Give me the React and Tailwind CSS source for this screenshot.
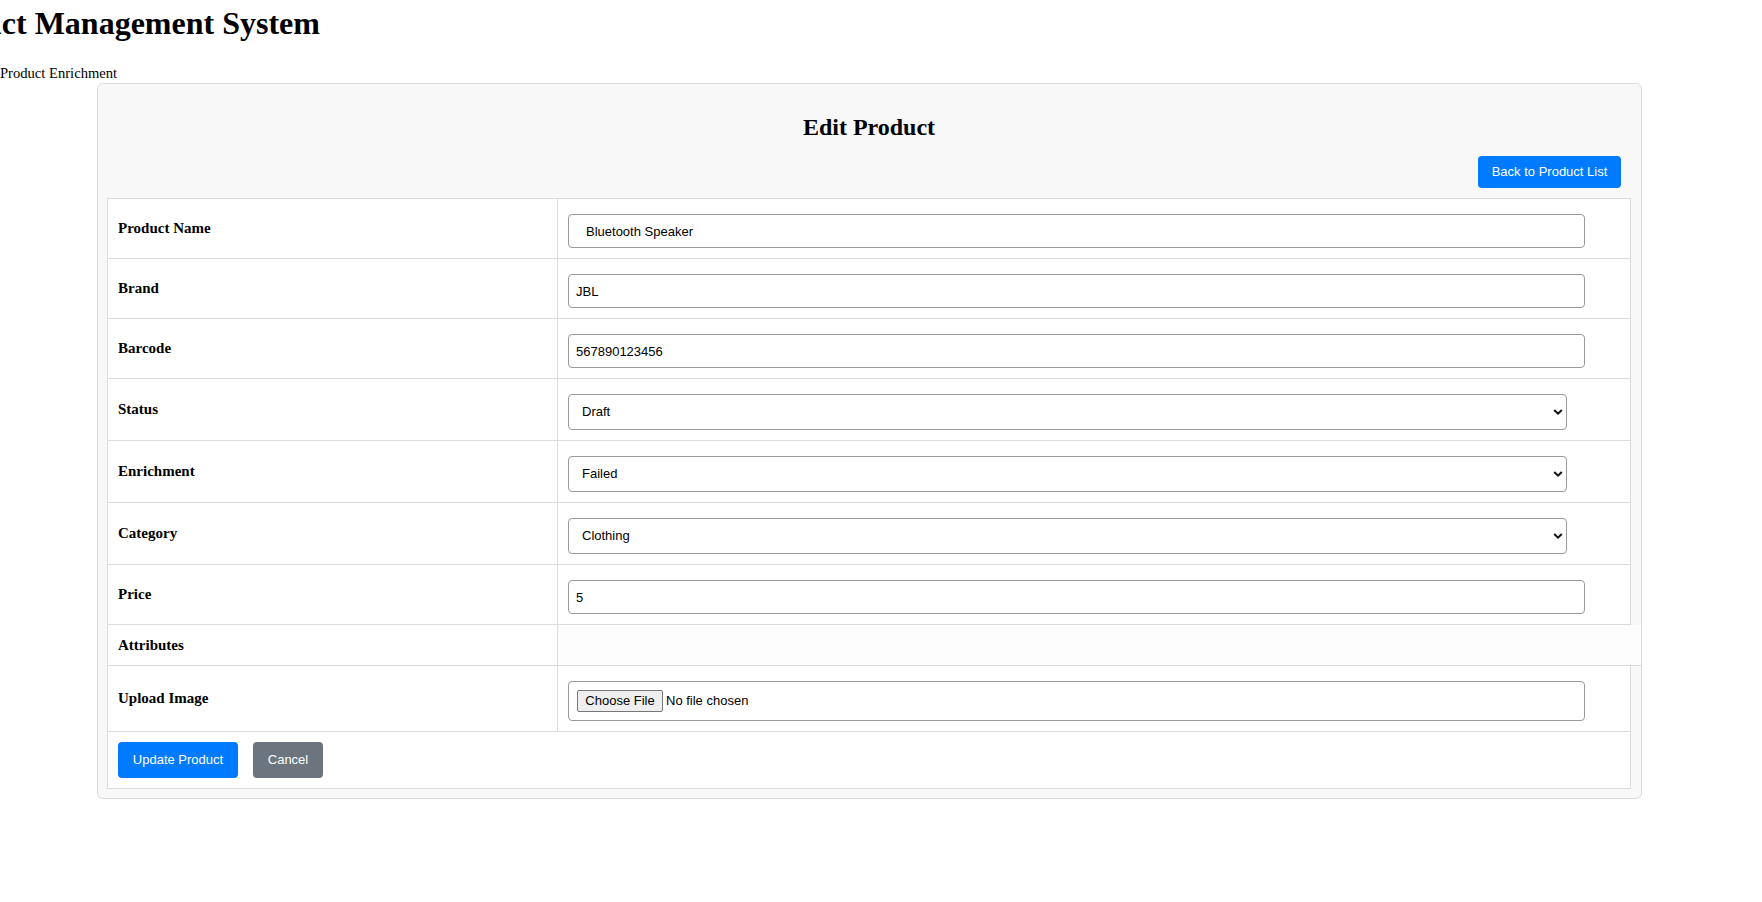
const sans = "font-['Liberation_Sans',Arial,sans-serif]";

const rows = [
  { label: "Product Name", kind: "text", value: "Bluetooth Speaker", pad: "pl-[17px]" },
  { label: "Brand", kind: "text", value: "JBL", pad: "pl-[7px]" },
  { label: "Barcode", kind: "text", value: "567890123456", pad: "pl-[7px]" },
  { label: "Status", kind: "select", value: "Draft", options: ["Draft", "Active", "Archived"] },
  { label: "Enrichment", kind: "select", value: "Failed", options: ["Pending", "Completed", "Failed"] },
  { label: "Category", kind: "select", value: "Clothing", options: ["Electronics", "Clothing", "Home"] },
  { label: "Price", kind: "text", value: "5", pad: "pl-[7px]" },
  { label: "Attributes", kind: "empty" },
  { label: "Upload Image", kind: "file" },
];

function Field({ row }) {
  if (row.kind === "text") {
    return (
      <input
        type="text"
        defaultValue={row.value}
        className={`block h-[34px] w-[1017px] rounded-[4px] border border-[#9a9a9a] bg-white text-[13px] text-black outline-none ${row.pad} ${sans}`}
      />
    );
  }
  if (row.kind === "select") {
    return (
      <div className="relative h-[36px] w-[999px]">
        <select
          defaultValue={row.value}
          className={`block h-full w-full appearance-none rounded-[4px] border border-[#9a9a9a] bg-white pl-[13px] text-[13px] text-black outline-none ${sans}`}
        >
          {row.options.map((o) => (
            <option key={o}>{o}</option>
          ))}
        </select>
        <svg
          className="pointer-events-none absolute right-[4px] top-1/2 -translate-y-1/2"
          width="10"
          height="7"
          viewBox="0 0 10 7"
        >
          <path d="M1.2 1.5L5 5.2L8.8 1.5" stroke="#111" strokeWidth="2" fill="none" />
        </svg>
      </div>
    );
  }
  // file input drawn by hand
  return (
    <div className={`flex h-[40px] w-[1017px] items-center rounded-[4px] border border-[#9a9a9a] bg-white pl-[8px] text-[13px] text-black ${sans}`}>
      <span className="flex h-[22px] w-[86px] items-center justify-center rounded-[2px] border border-[#767676] bg-[#efefef]">
        Choose File
      </span>
      <span className="ml-[3px]">No file chosen</span>
    </div>
  );
}

export default function App() {
  return (
    <div className="min-h-screen overflow-hidden bg-white font-['Liberation_Serif','Times_New_Roman',serif] text-black">
      <h1 className="-ml-[83px] whitespace-nowrap pt-[5px] text-[32px] font-bold leading-[37px]">
        Product Management System
      </h1>
      <div className="mt-[23px] text-[14.6px] leading-[17px]">Product Enrichment</div>

      <div className="ml-[97px] mt-[1px] w-[1545px] rounded-[6px] border border-[#dcdcdc] bg-[#f8f8f8] pb-[9px] pl-[9px] pr-[10px]">
        <h2 className="mt-[29px] text-center text-[24px] font-bold leading-[28px]">Edit Product</h2>

        <div className="mt-[15px] flex justify-end pr-[10px]">
          <button className={`h-[32px] w-[143px] rounded-[4px] bg-[#007bff] text-[13px] text-white ${sans}`}>
            Back to Product List
          </button>
        </div>

        <div className="mt-[10px]">
          {rows.map((row, i) =>
            row.kind === "empty" ? (
              <div key={row.label} className="-mr-[10px] flex border-b border-l border-[#dcdcdc] bg-[#fdfdfd]">
                <div className="flex h-[40px] w-[450px] shrink-0 items-center border-r border-[#dcdcdc] bg-white px-[10px] text-[15px] font-bold">
                  {row.label}
                </div>
                <div className="flex-1" />
              </div>
            ) : (
              <div
                key={row.label}
                className={`flex border-x border-b border-[#dcdcdc] bg-white ${i === 0 ? "border-t" : ""}`}
              >
                <div className="flex w-[450px] shrink-0 items-center border-r border-[#dcdcdc] px-[10px] text-[15px] font-bold">
                  {row.label}
                </div>
                <div className="flex-1 pb-[10px] pl-[10px] pt-[15px]">
                  <Field row={row} />
                </div>
              </div>
            )
          )}

          <div className="flex gap-[15px] border-x border-b border-[#dcdcdc] bg-white p-[10px]">
            <button className={`h-[36px] w-[120px] rounded-[4px] bg-[#007bff] text-[13px] text-white ${sans}`}>
              Update Product
            </button>
            <button className={`h-[36px] w-[70px] rounded-[4px] bg-[#6c757d] text-[13px] text-white ${sans}`}>
              Cancel
            </button>
          </div>
        </div>
      </div>
    </div>
  );
}
